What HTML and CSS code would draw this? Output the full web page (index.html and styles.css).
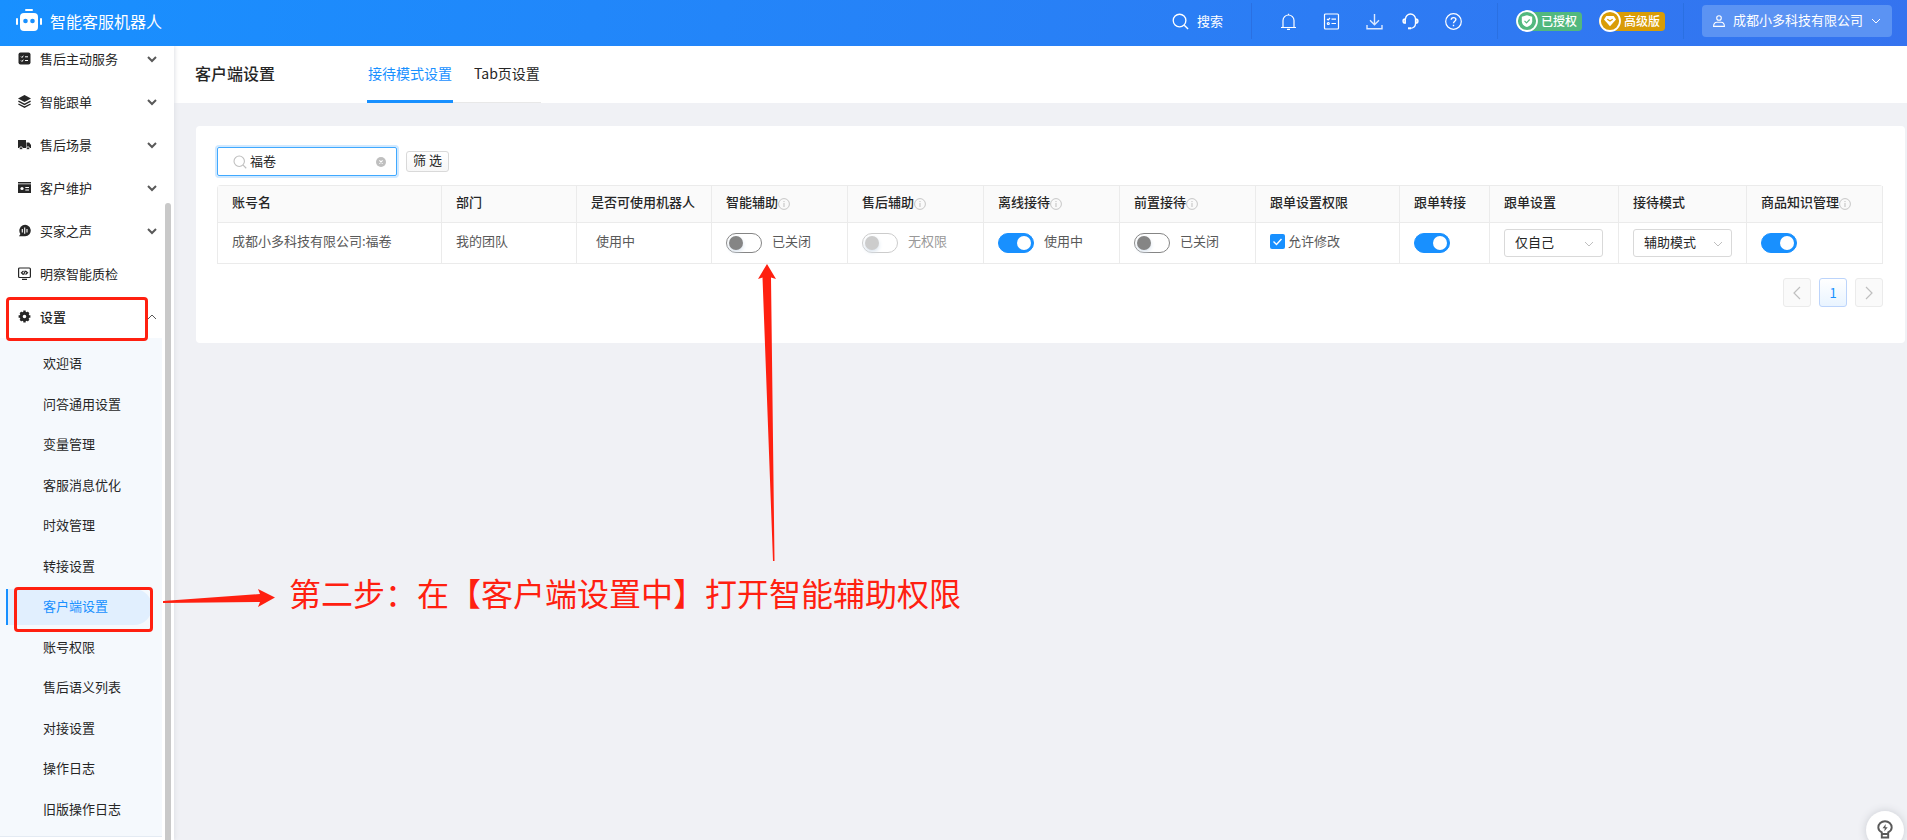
FILE: index.html
```html
<!DOCTYPE html>
<html lang="zh-CN">
<head>
<meta charset="utf-8">
<title>智能客服机器人</title>
<link rel="stylesheet" href="styles.css">
</head>
<body>
<svg class="defs" aria-hidden="true">
  <symbol id="chev" viewBox="0 0 10 10"><path d="M1 3l4 4 4-4" fill="none" stroke="currentColor"/></symbol>
  <symbol id="info" viewBox="0 0 12 12"><circle cx="6" cy="6" r="5.4" fill="none" stroke="currentColor" stroke-width=".9"/><path d="M6 5v4M6 3v1.1" stroke="currentColor"/></symbol>
  <symbol id="search" viewBox="0 0 18 18"><circle cx="8" cy="8" r="6.7" fill="none" stroke="currentColor" stroke-width="1.4"/><path d="M13 13l4 4" stroke="currentColor" stroke-width="1.5"/></symbol>
</svg>

<header class="top">
  <svg class="logo" viewBox="0 0 26 24" fill="#fff"><rect x="9" y="0" width="8" height="2" rx="1"/><rect x="4" y="4" width="18" height="18" rx="4"/><rect x="0" y="9" width="2" height="7" rx="1"/><rect x="24" y="9" width="2" height="7" rx="1"/><circle cx="9.500" cy="12" r="2.300" fill="#1890ff"/><circle cx="16.500" cy="12" r="2.300" fill="#1890ff"/></svg>
  <h1 class="brand">智能客服机器人</h1>
  <button class="top-search"><svg class="i17"><use href="#search"/></svg>搜索</button>
  <div class="tools">
    <button class="tool" aria-label="通知"><svg class="i17" viewBox="0 0 17 17" fill="none" stroke="#fff" stroke-width="1.2"><path d="M1 14.500h15M3 14.500V7.500a5.500 5.500 0 0 1 11 0v7M8.500 2V.8M7 16.300h3"/></svg></button>
    <button class="tool" aria-label="任务"><svg class="i17" viewBox="0 0 17 17" fill="none" stroke="#fff" stroke-width="1.2"><rect x="1.500" y="1" width="14" height="15" rx="1"/><path d="M4 6l1.200 1L7 5M8.500 6.200H13M8.500 10.500H13"/><circle cx="5.300" cy="10.500" r="1"/></svg></button>
    <button class="tool" aria-label="下载"><svg class="i17" viewBox="0 0 17 17" fill="none" stroke="#dbe8ff" stroke-width="1.400"><path d="M8.500 1v10.500M4 7.200l4.500 4.500L13 7.200M1 12v3.800h15V12"/></svg></button>
    <button class="tool tool-near" aria-label="客服"><svg class="i17" viewBox="0 0 17 17" fill="none" stroke="#fff" stroke-width="1.300"><path d="M3.500 6a5 5 0 0 1 10 0v4.500c0 3-2 4.800-5.500 4.800"/><path d="M3.300 5.800C1.500 5.800 1 6.800 1 8s.5 2.200 2.300 2.200zM13.700 5.800c1.800 0 2.300 1 2.300 2.200s-.5 2.200-2.300 2.200z" fill="#a9c9fb"/><path d="M6 15.300h3" stroke-width="2"/></svg></button>
    <button class="tool" aria-label="帮助"><svg class="i17" viewBox="0 0 17 17" fill="none" stroke="#fff" stroke-width="1.200"><circle cx="8.500" cy="8.500" r="7.800"/><path d="M6.200 6.800c0-3 4.700-2.800 4.700-.2 0 1.600-2.400 1.700-2.400 3.600M8.500 11.700v1.500" stroke-width="1.400"/></svg></button>
  </div>
  <div class="badges">
    <span class="badge green"><svg class="i22" viewBox="0 0 22 22"><circle cx="11" cy="11" r="10" fill="#52b87e" stroke="#fff" stroke-width="1.800"/><path d="M11 5.200l5.200 1.600v4.400c0 2.800-2 4.600-5.200 5.900-3.200-1.300-5.200-3.100-5.200-5.900V6.800z" fill="#fff"/><path d="M8.500 10.800l2 2 3.200-3.300" fill="none" stroke="#52b87e" stroke-width="1.200"/></svg>已授权</span>
    <span class="badge gold"><svg class="i22" viewBox="0 0 22 22"><circle cx="11" cy="11" r="10" fill="#d99c06" stroke="#fff" stroke-width="1.800"/><path d="M7.300 6h7.400l2.300 3.500-6 6.700-6-6.700z" fill="#fff"/><path d="M8.300 9.300L11 11l2.700-1.700" fill="none" stroke="#d99c06" stroke-width="1.300"/></svg>高级版</span>
  </div>
  <button class="account"><svg class="i12" viewBox="0 0 12 12" fill="none" stroke="#fff" stroke-width="1.100"><circle cx="6" cy="3" r="2.300"/><path d="M.6 11.400C.6 8 2.500 7.200 4 7.200h4c1.500 0 3.400.8 3.400 4.200z"/></svg><span class="company">成都小多科技有限公司</span><svg class="i10"><use href="#chev"/></svg></button>
</header>

<div class="body">
  <nav class="side">
    <ul class="menu">
      <li><button class="entry"><svg class="i13" viewBox="0 0 13 13"><rect x=".5" y=".5" width="12" height="12" rx="2" fill="#262626"/><path d="M3 4.500l1 1 1.300-1.800M3 8.500l1 1 1.300-1.800M7 4.800h3M7 8.500h3" stroke="#fff" fill="none"/></svg>售后主动服务<svg class="arrow"><use href="#chev"/></svg></button></li>
      <li><button class="entry"><svg class="i13" viewBox="0 0 13 13"><path d="M6.500 0L13 3.500 6.500 7 0 3.500z" fill="#262626"/><path d="M.4 6.200l6.100 3.200 6.100-3.200M.4 9l6.100 3.200L12.600 9" fill="none" stroke="#262626" stroke-width="1.300"/></svg>智能跟单<svg class="arrow"><use href="#chev"/></svg></button></li>
      <li><button class="entry"><svg class="i13" viewBox="0 0 13 13"><path d="M0 2h8v8H0zM8.500 4.500h2.700L13 7v3H8.500z" fill="#262626"/><circle cx="3" cy="10.300" r="1.500" fill="#262626" stroke="#fff" stroke-width=".8"/><circle cx="10" cy="10.300" r="1.500" fill="#262626" stroke="#fff" stroke-width=".8"/></svg>售后场景<svg class="arrow"><use href="#chev"/></svg></button></li>
      <li><button class="entry"><svg class="i13" viewBox="0 0 13 13"><path d="M0 1h13v1.500H0zM0 3.300h13V12H0z" fill="#262626"/><circle cx="4" cy="7.500" r="1.600" fill="#fff"/><path d="M7.300 6.500H11M7.300 9H11" stroke="#fff"/></svg>客户维护<svg class="arrow"><use href="#chev"/></svg></button></li>
      <li><button class="entry"><svg class="i13" viewBox="0 0 13 13"><path d="M1 12.300h6a5.700 5.700 0 1 0-4.600-2.400z" fill="#262626"/><path d="M4.300 5v3.500M6.700 3.500v6.300M9 5v3.500" stroke="#fff" stroke-width="1.100"/></svg>买家之声<svg class="arrow"><use href="#chev"/></svg></button></li>
      <li><button class="entry"><svg class="i13" viewBox="0 0 13 13" fill="none" stroke="#262626" stroke-width="1.200"><rect x=".6" y="1" width="11.800" height="9.500" rx="1"/><path d="M4 12.300h5M5.500 4L3.500 5.800 5.200 7.500M7.500 4l2 1.700-2 1.800M7.300 3.800L5.600 7.800"/></svg>明察智能质检</button></li>
      <li><button class="entry current"><svg class="i13" viewBox="0 0 13 13"><circle cx="6.500" cy="6.500" r="3.300" fill="none" stroke="#262626" stroke-width="3"/><path d="M6.500 .6v2M6.500 10.400v2M.6 6.500h2M10.400 6.500h2M2.400 2.400l1.500 1.500M9.100 9.100l1.500 1.500M2.400 10.600l1.500-1.500M9.100 3.900l1.500-1.500" stroke="#262626" stroke-width="2.400"/></svg>设置<svg class="arrow up"><use href="#chev"/></svg></button></li>
    </ul>
    <ul class="sub">
      <li><a href="#">欢迎语</a></li>
      <li><a href="#">问答通用设置</a></li>
      <li><a href="#">变量管理</a></li>
      <li><a href="#">客服消息优化</a></li>
      <li><a href="#">时效管理</a></li>
      <li><a href="#">转接设置</a></li>
      <li><a href="#" class="on" aria-current="page">客户端设置</a></li>
      <li><a href="#">账号权限</a></li>
      <li><a href="#">售后语义列表</a></li>
      <li><a href="#">对接设置</a></li>
      <li><a href="#">操作日志</a></li>
      <li><a href="#">旧版操作日志</a></li>
    </ul>
    <div class="thumb"></div>
  </nav>

  <main class="main">
    <div class="pagebar">
      <h2 class="title">客户端设置</h2>
      <div class="tabs">
        <a href="#" class="tab on">接待模式设置</a>
        <a href="#" class="tab">Tab页设置</a>
      </div>
    </div>

    <section class="panel">
      <form class="filters">
        <div class="field">
          <svg class="i14"><use href="#search"/></svg>
          <input type="text" value="福卷" aria-label="搜索账号">
          <button type="button" class="clear" aria-label="清除"><svg class="i10" viewBox="0 0 10 10"><circle cx="5" cy="5" r="5" fill="#bfbfbf"/><path d="M3.400 3.400l3.200 3.200M6.600 3.400L3.400 6.600" stroke="#fff" stroke-width="1.100"/></svg></button>
        </div>
        <button type="button" class="filter-btn">筛 选</button>
      </form>

      <table class="grid">
        <colgroup><col class="w224"><col class="w135"><col class="w135"><col class="w136"><col class="w136"><col class="w136"><col class="w136"><col class="w144"><col class="w90"><col class="w129"><col class="w128"><col class="w136"></colgroup>
        <thead>
          <tr>
            <th>账号名</th><th>部门</th><th>是否可使用机器人</th>
            <th>智能辅助<svg class="info"><use href="#info"/></svg></th>
            <th>售后辅助<svg class="info"><use href="#info"/></svg></th>
            <th>离线接待<svg class="info"><use href="#info"/></svg></th>
            <th>前置接待<svg class="info"><use href="#info"/></svg></th>
            <th>跟单设置权限</th><th>跟单转接</th><th>跟单设置</th><th>接待模式</th>
            <th>商品知识管理<svg class="info"><use href="#info"/></svg></th>
          </tr>
        </thead>
        <tbody>
          <tr>
            <td>成都小多科技有限公司:福卷</td>
            <td>我的团队</td>
            <td class="inset">使用中</td>
            <td><label class="opt"><input type="checkbox" role="switch" class="switch"><span>已关闭</span></label></td>
            <td><label class="opt off"><input type="checkbox" role="switch" class="switch" disabled><span>无权限</span></label></td>
            <td><label class="opt"><input type="checkbox" role="switch" class="switch" checked><span>使用中</span></label></td>
            <td><label class="opt"><input type="checkbox" role="switch" class="switch"><span>已关闭</span></label></td>
            <td><label class="opt tick"><input type="checkbox" class="check" checked><svg class="mark" viewBox="0 0 15 15"><path d="M3.500 7.500l3 3 5-5.500" fill="none" stroke="#fff" stroke-width="1.400"/></svg><span>允许修改</span></label></td>
            <td><div class="opt"><input type="checkbox" role="switch" class="switch" checked aria-label="跟单转接"></div></td>
            <td><div class="pick"><select aria-label="跟单设置"><option>仅自己</option></select><svg class="i10"><use href="#chev"/></svg></div></td>
            <td><div class="pick"><select aria-label="接待模式"><option>辅助模式</option></select><svg class="i10"><use href="#chev"/></svg></div></td>
            <td><div class="opt"><input type="checkbox" role="switch" class="switch" checked aria-label="商品知识管理"></div></td>
          </tr>
        </tbody>
      </table>

      <div class="pager">
        <button aria-label="上一页"><svg class="turn" viewBox="0 0 8 14"><path d="M7 1L1 7l6 6" fill="none" stroke="#bfbfbf" stroke-width="1.200"/></svg></button>
        <button class="on">1</button>
        <button aria-label="下一页"><svg class="turn" viewBox="0 0 8 14"><path d="M1 1l6 6-6 6" fill="none" stroke="#bfbfbf" stroke-width="1.200"/></svg></button>
      </div>
    </section>
  </main>
</div>

<button class="bulb" aria-label="提示"><svg class="bulb-icon" viewBox="0 0 16 20" fill="none" stroke="#595959" stroke-width="1.900"><path d="M4.800 14v-1.600C2.500 11.200 1.300 9.500 1.300 7.500a6.700 6.300 0 0 1 13.400 0c0 2-1.200 3.700-3.500 4.900V14zM4.800 14v3.500h6.400V14"/><path d="M8.800 4L5.500 8.300h2.300L7.300 11.500l3.400-4.300H8.400z" fill="#595959" stroke="none"/></svg></button>

<div class="box box-settings"></div>
<div class="box box-client"></div>
<svg class="arrow-right" viewBox="0 0 112 18" fill="#ff2010"><path d="M0 12l97-7-2-5 17 8.500L95 18l2-5L0 14z"/></svg>
<svg class="arrow-up" viewBox="0 0 18 298" fill="#ff2010"><path d="M9 0l9 15-5-1.500L16.500 297H15L4.500 13.500 0 15z"/></svg>
<p class="note">第二步：在【客户端设置中】打开智能辅助权限</p>
</body>
</html>
```

FILE: styles.css
```css
* { box-sizing: border-box; }
body {
  margin: 0;
  height: 100vh;
  overflow: hidden;
  display: flex;
  flex-direction: column;
  background: #f0f1f5;
  color: #262626;
  font: 13px/20px "Noto Sans CJK SC", sans-serif;
}
button, input, select { font: inherit; color: inherit; margin: 0; }
button { background: none; border: 0; padding: 0; cursor: pointer; }
ul { list-style: none; margin: 0; padding: 0; }
a { color: inherit; text-decoration: none; }
h1, h2, p { margin: 0; }
svg { display: block; flex: none; }
.defs { position: absolute; width: 0; height: 0; }
.i10 { width: 10px; height: 10px; }
.i12 { width: 12px; height: 12px; }
.i13 { width: 13px; height: 13px; }
.i14 { width: 14px; height: 14px; }
.i17 { width: 17px; height: 17px; }
.i22 { width: 22px; height: 22px; }

/* top bar */
.top {
  position: relative;
  z-index: 2;
  flex: none;
  height: 46px;
  padding: 0 15px 4px 16px;
  display: flex;
  align-items: center;
  color: #fff;
  background: linear-gradient(100deg, #1890ff, #3573ef);
}
.logo { width: 26px; height: 24px; }
.brand { margin-left: 8px; font-size: 16px; font-weight: 400; }
.top-search { display: flex; align-items: center; gap: 8px; margin-left: auto; padding-right: 28px; }
.tools, .badges { display: flex; align-items: center; height: 36px; border-left: 1px solid #2a70e2; }
.tools { gap: 26px; padding: 0 35px 0 28px; }
.tool-near { margin-left: -7px; }
.badges { gap: 17px; padding: 0 18px; border-right: 1px solid #2a70e2; }
.badge {
  display: flex;
  align-items: center;
  gap: 3px;
  height: 19px;
  padding-right: 5px;
  border-radius: 10px 4px 4px 10px;
  font-size: 12px;
  font-weight: 500;
}
.green { background: #52b87e; }
.gold { background: #d99c06; }
.account {
  display: flex;
  align-items: center;
  gap: 8px;
  height: 32px;
  margin-left: 18px;
  padding: 0 11px;
  border-radius: 4px;
  background: #5b93f3;
}
.company { padding-bottom: 3px; }

/* sidebar */
.body { flex: 1; min-height: 0; display: flex; }
.side {
  position: relative;
  flex: none;
  width: 174px;
  display: flex;
  flex-direction: column;
  background: #fff;
  box-shadow: 1px 0 4px #dfe1e6;
}
.menu { margin-top: -9px; }
.entry {
  width: 100%;
  height: 43px;
  padding: 0 17px 0 18px;
  display: flex;
  align-items: center;
  gap: 9px;
}
.current { font-weight: 500; }
.arrow { width: 10px; height: 10px; margin-left: auto; color: #595959; stroke-width: 2; }
.up { transform: rotate(180deg); stroke-width: 1; }
.sub {
  flex: 1;
  margin: 0 12px 3px 0;
  padding: 8px 0;
  display: flex;
  flex-direction: column;
  justify-content: space-between;
  background: #f5f9fd;
  border-bottom: 1px solid #e4ebf3;
}
.sub a { display: block; margin: 0 10px 0 6px; padding: 7px 0 9px 35px; border-left: 2px solid transparent; }
.sub .on { color: #1890ff; background: #e1effe; border-color: #1890ff; border-radius: 0 18px 18px 0; }
.thumb { position: absolute; top: 157px; right: 3px; bottom: 0; width: 6px; border-radius: 3px 3px 0 0; background: #c9c9c9; }

/* page header */
.main { flex: 1; min-width: 0; }
.pagebar { display: flex; height: 57px; padding-left: 21px; background: #fff; }
.title { width: 172px; font-size: 16px; line-height: 54px; font-weight: 500; }
.tabs { display: flex; gap: 20px; border-bottom: 1px solid #e8e8e8; }
.tab { height: 57px; padding: 0 1px; font-size: 14px; line-height: 54px; }
.tab.on { color: #1890ff; border-bottom: 3px solid #1890ff; }

/* panel */
.panel { margin: 23px 2px 0 22px; padding: 21px 22px 36px 21px; border-radius: 4px; background: #fff; }
.filters { display: flex; align-items: center; gap: 9px; margin-bottom: 9px; }
.field {
  width: 180px;
  height: 29px;
  padding: 0 10px 0 15px;
  display: flex;
  align-items: center;
  gap: 3px;
  border: 1px solid #40a9ff;
  border-radius: 2px;
  box-shadow: 0 0 0 2px #d1e9ff;
  color: #bfbfbf;
}
.field input { flex: 1; min-width: 0; height: 24px; padding: 0 0 3px; border: 0; outline: 0; background: none; color: #262626; }
.filter-btn { height: 21px; padding: 0 6px 3px; border: 1px solid #d9d9d9; border-radius: 3px; line-height: 16px; background: linear-gradient(#fff, #f7f7f7); }

.grid { width: 100%; table-layout: fixed; border-collapse: separate; border-spacing: 0; border: solid #ebebeb; border-width: 1px 0 0 1px; border-radius: 4px 4px 0 0; }
.w224 { width: 224px; }
.w135 { width: 135px; }
.w136 { width: 136px; }
.w144 { width: 144px; }
.w90 { width: 90px; }
.w129 { width: 129px; }
.w128 { width: 128px; }
.grid th, .grid td { padding: 0 0 0 14px; border: solid #ebebeb; border-width: 0 1px 1px 0; text-align: left; white-space: nowrap; }
.grid th { height: 37px; padding-bottom: 5px; background: #fafafa; font-weight: 500; }
.grid td { height: 41px; padding-bottom: 4px; color: #595959; }
.grid .inset { padding-left: 19px; }
.info { display: inline-block; width: 12px; height: 12px; vertical-align: -3px; color: #bfbfbf; }
.opt { display: flex; align-items: center; gap: 10px; }
.switch {
  appearance: none;
  width: 36px;
  height: 20px;
  padding: 2px;
  display: flex;
  margin-top: 4px;
  border: 1px solid #858585;
  border-radius: 10px;
  background: #fff;
}
.switch::before { content: ""; width: 14px; height: 14px; border-radius: 50%; background: #858585; box-shadow: 0 2px 4px #d8e2ec; }
.switch:checked { border-color: #1890ff; background: #1890ff; justify-content: flex-end; }
.switch:checked::before { background: #fff; box-shadow: none; }
.off { color: #999; }
.switch:disabled { border-color: #ccc; }
.switch:disabled::before { background: #ccc; }
.tick { position: relative; gap: 3px; }
.check { appearance: none; width: 15px; height: 15px; border-radius: 2px; background: #1890ff; }
.mark { position: absolute; left: 0; width: 15px; height: 15px; }
.pick { position: relative; width: 99px; margin-top: 4px; color: #262626; }
.pick select { appearance: none; display: block; width: 100%; height: 28px; padding: 0 24px 3px 10px; border: 1px solid #d9d9d9; border-radius: 3px; background: #fff; }
.pick svg { position: absolute; right: 9px; top: 10px; color: #bfbfbf; }

.pager { display: flex; justify-content: flex-end; gap: 8px; margin-top: 14px; }
.pager button { width: 28px; height: 29px; display: grid; place-items: center; border: 1px solid #ebebeb; border-radius: 3px; background: #fafafa; }
.pager .on { color: #1890ff; border-color: #bcd4fb; background: linear-gradient(#fff, #e9f4ff); }
.turn { width: 8px; height: 14px; }

/* floating help */
.bulb {
  position: absolute;
  right: 3px;
  bottom: -9px;
  width: 38px;
  height: 38px;
  display: grid;
  place-items: center;
  border-radius: 50%;
  background: #fff;
  box-shadow: 0 0 8px #c9ccd2;
}
.bulb-icon { width: 16px; height: 20px; }

/* annotations over the page */
.box { position: absolute; z-index: 3; border: 3px solid #ff2010; border-radius: 4px; }
.box-settings { left: 6px; top: 297px; width: 142px; height: 44px; }
.box-client { left: 14px; top: 587px; width: 139px; height: 45px; }
.arrow-right { position: absolute; left: 163px; top: 589px; width: 112px; height: 18px; }
.arrow-up { position: absolute; left: 758px; top: 264px; width: 18px; height: 298px; }
.note { position: absolute; left: 289px; top: 568px; font-size: 32px; line-height: 48px; color: #ff2010; white-space: nowrap; }
```
